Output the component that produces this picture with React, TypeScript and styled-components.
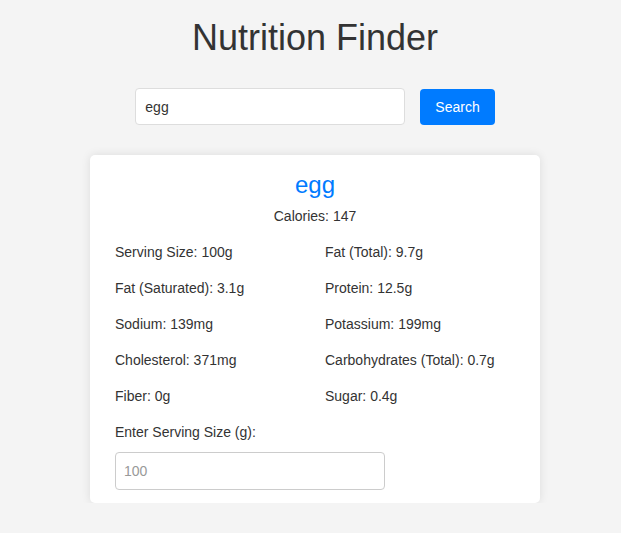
import React from "react";
import styled, { createGlobalStyle } from "styled-components";

const Global = createGlobalStyle`
  html, body { margin: 0; padding: 0; background: #f4f4f4; }
  body { font-family: "Liberation Sans", Arial, sans-serif; color: #333; }
  * { box-sizing: border-box; }
`;

const Page = styled.div`
  display: flex;
  flex-direction: column;
  align-items: center;
  padding: 17px 0 0 9px;
`;

const Title = styled.h1`
  margin: 0;
  font-size: 36px;
  font-weight: 400;
  line-height: 42px;
  color: #333;
`;

const SearchRow = styled.div`
  display: flex;
  align-items: center;
  gap: 15px;
  margin-top: 29px;
`;

const SearchInput = styled.input`
  width: 270px;
  height: 37px;
  padding: 0 9px;
  font-family: inherit;
  font-size: 14px;
  color: #333;
  border: 1px solid #ddd;
  border-radius: 4px;
  background: #fff;
  outline: none;
`;

const Button = styled.button`
  height: 36px;
  padding: 0 15px;
  font-family: inherit;
  font-size: 14px;
  color: #fff;
  background: #007bff;
  border: none;
  border-radius: 4px;
  cursor: pointer;
`;

const Card = styled.div`
  margin-top: 30px;
  width: 450px;
  background: #fff;
  border-radius: 5px;
  box-shadow: 0 0 10px rgba(0, 0, 0, 0.1);
  padding: 16px 20px 13px;
  display: flex;
  flex-direction: column;
`;

const FoodName = styled.h2`
  margin: 0;
  text-align: center;
  font-size: 24px;
  font-weight: 400;
  line-height: 28px;
  color: #007bff;
`;

const Calories = styled.p`
  margin: 9px 0 0;
  text-align: center;
  font-size: 14px;
  line-height: 16px;
`;

const Grid = styled.div`
  display: grid;
  grid-template-columns: 1fr 1fr;
  column-gap: 10px;
  margin-top: 10px;
`;

const Item = styled.div`
  padding: 10px 5px;
  font-size: 14px;
  line-height: 16px;
`;

const Label = styled.label`
  display: block;
  margin: 10px 5px 0;
  font-size: 14px;
  line-height: 16px;
`;

const ServingInput = styled.input`
  margin: 12px 5px 0;
  width: 270px;
  height: 38px;
  padding: 0 8px;
  font-family: inherit;
  font-size: 14px;
  color: #333;
  border: 1px solid #ccc;
  border-radius: 4px;
  outline: none;
  &::placeholder { color: #999; }
`;

const nutrients: [string, string][] = [
  ["Serving Size", "100g"],
  ["Fat (Total)", "9.7g"],
  ["Fat (Saturated)", "3.1g"],
  ["Protein", "12.5g"],
  ["Sodium", "139mg"],
  ["Potassium", "199mg"],
  ["Cholesterol", "371mg"],
  ["Carbohydrates (Total)", "0.7g"],
  ["Fiber", "0g"],
  ["Sugar", "0.4g"],
];

export default function App() {
  return (
    <>
      <Global />
      <Page>
        <Title>Nutrition Finder</Title>
        <SearchRow>
          <SearchInput defaultValue="egg" />
          <Button>Search</Button>
        </SearchRow>
        <Card>
          <FoodName>egg</FoodName>
          <Calories>Calories: 147</Calories>
          <Grid>
            {nutrients.map(([k, v]) => (
              <Item key={k}>
                {k}: {v}
              </Item>
            ))}
          </Grid>
          <Label htmlFor="serving">Enter Serving Size (g):</Label>
          <ServingInput id="serving" placeholder="100" />
        </Card>
      </Page>
    </>
  );
}
